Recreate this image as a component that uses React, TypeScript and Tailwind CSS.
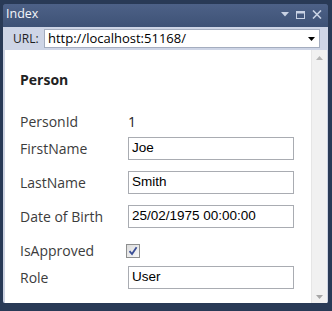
import React from 'react';

const SEGOE = { fontFamily: '"Open Sans", "Noto Sans", sans-serif' };
const ARIAL = { fontFamily: '"Liberation Sans", Arial, sans-serif' };

function TextBox({ value }: { value: string }) {
  return (
    <div
      className="w-[166px] h-[23px] border border-[#a9acb2] bg-white pl-[3px] flex items-center text-[13.5px] text-black"
      style={ARIAL}
    >
      {value}
    </div>
  );
}

function CheckBox() {
  return (
    <div className="ml-[-2px] w-[14px] h-[14px] border border-[#8e8f8f] bg-gradient-to-br from-[#dcdcdc] to-[#f8f8f8] flex items-center justify-center">
      <svg width="10" height="10" viewBox="0 0 10 10">
        <path d="M1.5 5.2 L4 8 L8.6 1.2" fill="none" stroke="#3a4e96" strokeWidth="1.8" />
      </svg>
    </div>
  );
}

function Row({ label, children, className }: { label: string; children: React.ReactNode; className: string }) {
  return (
    <div className={`flex items-center h-[23px] ${className}`}>
      <div className="w-[108px] text-[14px] text-[#3c3c3c]" style={SEGOE}>{label}</div>
      {children}
    </div>
  );
}

export default function App() {
  return (
    <div className="w-[332px] h-[311px] bg-[#293a56] pt-[4px] pl-[3px] pr-[4px] pb-[8px] flex flex-col">
      {/* Tool window */}
      <div className="flex-1 flex flex-col rounded-t-[3px] bg-[#41557a] overflow-hidden">
        {/* Title */}
        <div className="h-[23px] flex items-center pl-[3px] pr-[6px] bg-gradient-to-b from-[#4d6187] to-[#3e5276]">
          <span className="text-[12.5px] text-[#f4f6fa] leading-none mt-[-2px]" style={SEGOE}>Index</span>
          <div className="flex-1" />
          <div className="flex items-center gap-[7px] mt-[-2px]">
            <svg width="8" height="5" viewBox="0 0 8 5">
              <path d="M0 0 H8 L4 4.5 Z" fill="#c9d2e4" />
            </svg>
            <svg width="9" height="8" viewBox="0 0 9 8">
              <rect x="0.5" y="0.5" width="8" height="7" fill="none" stroke="#c9d2e4" />
              <rect x="0.5" y="0.5" width="8" height="2" fill="#c9d2e4" />
            </svg>
            <svg width="10" height="9" viewBox="0 0 10 9">
              <path d="M1 0.5 L9 8.5 M9 0.5 L1 8.5" stroke="#c9d2e4" strokeWidth="1.6" />
            </svg>
          </div>
        </div>

        {/* URL bar */}
        <div className="h-[23px] bg-[#ced5e6] flex items-center pl-[10px] pr-[8px]">
          <span className="w-[31px] text-[12px] text-[#1e1e1e]" style={SEGOE}>URL:</span>
          <div className="flex-1 h-[19px] bg-white border border-[#a4adbf] flex items-center pl-[3px] pr-[4px]">
            <span className="flex-1 text-[13px] text-black leading-none" style={SEGOE}>http://localhost:51168/</span>
            <svg width="7" height="4" viewBox="0 0 7 4">
              <path d="M0 0 H7 L3.5 4 Z" fill="#000" />
            </svg>
          </div>
        </div>

        {/* Content */}
        <div className="flex-1 flex bg-white border-l-[2px] border-r border-[#cdd3e2] rounded-b-[2px]">
          <div className="flex-1 pl-[15px] pt-[21px]">
            <div className="text-[14px] font-bold text-[#222] h-[18px] leading-[18px]" style={SEGOE}>Person</div>
            <Row label="PersonId" className="mt-[21px]">
              <span className="text-[14px] text-[#222]" style={SEGOE}>1</span>
            </Row>
            <Row label="FirstName" className="mt-[4px]"><TextBox value="Joe" /></Row>
            <Row label="LastName" className="mt-[11px]"><TextBox value="Smith" /></Row>
            <Row label="Date of Birth" className="mt-[11px]"><TextBox value="25/02/1975 00:00:00" /></Row>
            <Row label="IsApproved" className="mt-[11px]"><CheckBox /></Row>
            <Row label="Role" className="mt-[4px]"><TextBox value="User" /></Row>
          </div>
          {/* Scrollbar */}
          <div className="w-[16px] bg-[#f1f1f1] border-l border-[#e6e6e6] flex flex-col items-center justify-between pt-[6px] pb-[4px]">
            <svg width="7" height="4" viewBox="0 0 7 4">
              <path d="M0 4 H7 L3.5 0 Z" fill="#b5b5b5" />
            </svg>
            <svg width="7" height="4" viewBox="0 0 7 4">
              <path d="M0 0 H7 L3.5 4 Z" fill="#a6a6a6" />
            </svg>
          </div>
        </div>
      </div>
    </div>
  );
}
